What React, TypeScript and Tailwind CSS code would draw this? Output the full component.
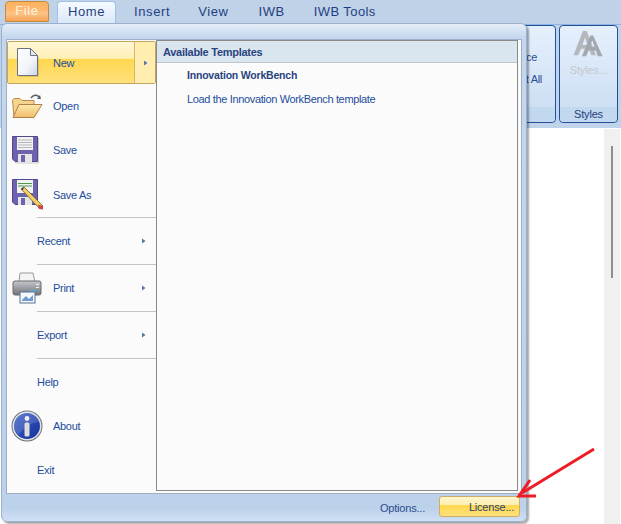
const font = { fontFamily: '"Liberation Sans", Arial, sans-serif' };

const Arrow = () => (
  <svg width="5" height="6" viewBox="0 0 5 6" className="shrink-0">
    <path d="M1 0.5 L4.5 3 L1 5.5 Z" fill="#5a75a8" />
  </svg>
);

const NewIcon = () => (
  <svg width="26" height="32" viewBox="0 0 26 32">
    <defs>
      <linearGradient id="doc" x1="0" y1="0" x2="1" y2="1">
        <stop offset="0" stopColor="#ffffff" />
        <stop offset="0.6" stopColor="#f2f4fa" />
        <stop offset="1" stopColor="#cdd5e8" />
      </linearGradient>
    </defs>
    <path d="M3 2 H16 L23 9 V29 H3 Z" fill="#000" opacity="0.12" transform="translate(1 1)" />
    <path d="M2.5 1.5 H15.5 L22.5 8.5 V28.5 H2.5 Z" fill="url(#doc)" stroke="#6b7280" />
    <path d="M15.5 1.5 V8.5 H22.5 Z" fill="#e2e6ee" stroke="#6b7280" />
  </svg>
);

const OpenIcon = () => (
  <svg width="32" height="26" viewBox="0 0 32 26">
    <defs>
      <linearGradient id="fold" x1="0" y1="0" x2="0" y2="1">
        <stop offset="0" stopColor="#fdeab0" />
        <stop offset="1" stopColor="#f0bb6a" />
      </linearGradient>
    </defs>
    <path d="M20 5 C22 2 26 1 28 4" fill="none" stroke="#55606e" strokeWidth="1.4" />
    <path d="M30 6 L26 6 L29 2 Z" fill="#55606e" />
    <path d="M1.5 7.5 L3 5.5 H9 L11 7.5 H23 V13 L7 24 H3 Z" fill="#f6d48d" stroke="#b88a4e" />
    <path d="M8 11.5 H31 L23 24.5 H2 Z" fill="url(#fold)" stroke="#b07f45" />
  </svg>
);

const Disk = () => (
  <>
    <path d="M0.5 0.5 H25.5 V25.5 H3 L0.5 23 Z" fill="#6d62ad" stroke="#51488c" />
    <rect x="5" y="1" width="16" height="13" fill="#f2f2f2" />
    <rect x="6" y="18" width="14" height="8" fill="#e6e6e6" />
    <rect x="9" y="19" width="4" height="7" fill="#6d62ad" />
  </>
);

const SaveIcon = () => (
  <svg width="28" height="28" viewBox="0 0 28 28" className="ml-px">
    <Disk />
    <path d="M6 4 H20 M6 6.5 H20 M6 9 H20 M6 11.5 H20" stroke="#b8b8b8" />
    <path d="M26.5 2 V27 H3" fill="none" stroke="#000" opacity="0.2" />
  </svg>
);

const SaveAsIcon = () => (
  <svg width="32" height="32" viewBox="0 0 32 32" className="ml-px">
    <Disk />
    <path d="M6 4.5 H20" stroke="#4b9b4b" />
    <path d="M6 7 H20" stroke="#4b9b4b" />
    <path d="M9 10 L12 8 L31 27 L27 29 Z" fill="#f3cf63" stroke="#6d5a2a" strokeWidth="0.8" />
    <path d="M26 25.5 L31 27 L31 30.5 L27 30 Z" fill="#c9464f" />
    <path d="M9 10 L12 8 L11 11 Z" fill="#333" />
  </svg>
);

const PrintIcon = () => (
  <svg width="30" height="32" viewBox="0 0 30 32" className="ml-px">
    <defs>
      <linearGradient id="prn" x1="0" y1="0" x2="0" y2="1">
        <stop offset="0" stopColor="#c5c8cc" />
        <stop offset="1" stopColor="#6f7378" />
      </linearGradient>
    </defs>
    <path d="M8 1 H21 L23 10 H7 Z" fill="#f4f4f4" stroke="#9b9b9b" />
    <rect x="1" y="9" width="28" height="14" rx="2" fill="url(#prn)" stroke="#6a6a6a" />
    <rect x="24" y="12" width="3" height="1" fill="#eee" />
    <rect x="24" y="15" width="3" height="1" fill="#eee" />
    <rect x="18" y="18" width="6" height="2" fill="#5ea8e0" />
    <rect x="8" y="20" width="15" height="11" fill="#f5f8fc" stroke="#5b6f8f" />
    <path d="M10 28 L14 24 L17 27 L21 23 V29 H10 Z" fill="#6f9ad0" />
  </svg>
);

const InfoIcon = () => (
  <svg width="32" height="32" viewBox="0 0 32 32">
    <defs>
      <linearGradient id="inf" x1="0" y1="0" x2="1" y2="1">
        <stop offset="0" stopColor="#3f63c8" />
        <stop offset="1" stopColor="#16309c" />
      </linearGradient>
    </defs>
    <circle cx="16" cy="16" r="15.5" fill="#6b6f78" />
    <circle cx="16" cy="16" r="14.5" fill="#dfe2e6" />
    <circle cx="16" cy="16" r="13" fill="url(#inf)" />
    <path d="M3 16 A13 13 0 0 1 29 12 C20 12 12 18 8 25 A13 13 0 0 1 3 16 Z" fill="#fff" opacity="0.14" />
    <circle cx="16" cy="8.5" r="2.4" fill="#f2f2f2" />
    <rect x="13.5" y="12.5" width="5" height="14" rx="1.5" fill="#dcdcdc" />
  </svg>
);

const StylesIcon = () => (
  <svg width="31" height="28" viewBox="0 0 32 30">
    <path d="M0 27 L10 1 H14 L24 27 H19 L16.5 20 H8 L5 27 Z M9.5 16 H15 L12.2 8 Z" fill="#b4b8bd" fillRule="evenodd" />
    <path d="M9 28 L18 6 H21 L31 28 H26 L24 22 H16 L13.5 28 Z M17.5 18 H22.5 L20 11 Z" fill="#a3a8ae" fillRule="evenodd" />
  </svg>
);

const MenuRow = ({
  label,
  icon,
  arrow,
  h = 'h-[44px]',
}: {
  label: string;
  icon?: React.ReactNode;
  arrow?: boolean;
  h?: string;
}) => (
  <div className={`${h} flex items-center text-[11px] tracking-[-0.3px] text-[#1e4e9c]`}>
    {icon ? (
      <div className="w-[46px] pl-[4px] flex items-center justify-start">{icon}</div>
    ) : (
      <div className="w-[30px]" />
    )}
    <span className="flex-1 pt-px">{label}</span>
    {arrow && (
      <div className="pr-[10px]">
        <Arrow />
      </div>
    )}
  </div>
);

const Sep = () => <div className="h-px ml-[30px] bg-[#c5c5c5]" />;

export default function App() {
  return (
    <div className="relative w-[621px] h-[524px] overflow-hidden bg-white" style={font}>
      {/* tab strip */}
      <div className="h-[24px] bg-[#bfd2e8] flex items-end pl-[5px] text-[13px] text-[#1f3f82] tracking-[0.6px]">
        <div className="w-[44px] h-[21px] mb-[2px] pb-[1px] rounded-t-[4px] border border-[#c98a3e] bg-[linear-gradient(#fdb25f_0%,#ffb872_45%,#fbc48c_60%,#f9a24e_100%)] flex items-center justify-center text-[#fff3e0]">
          File
        </div>
        <div className="ml-[8px] w-[59px] h-[23px] pb-[2px] rounded-t-[4px] border border-b-0 border-[#9fc0e8] bg-gradient-to-b from-[#f5f9fe] to-[#dbe8f8] flex items-center justify-center">
          Home
        </div>
        <div className="ml-[18px] h-[22px] pb-[2px] flex items-center">Insert</div>
        <div className="ml-[28px] h-[22px] pb-[2px] flex items-center">View</div>
        <div className="ml-[30px] h-[22px] pb-[2px] flex items-center">IWB</div>
        <div className="ml-[29px] h-[22px] pb-[2px] flex items-center tracking-[0.4px]">IWB Tools</div>
      </div>

      {/* ribbon */}
      <div className="h-[104px] bg-[#bfd3ea] border-t border-[#8fb4e6] flex justify-end pr-[3px] pb-[5px] gap-[3px]">
        <div className="w-[116px] rounded-[4px] border border-[#24509a] bg-gradient-to-b from-[#e6f0fd] to-[#c9dcf2] flex flex-col">
          <div className="flex-1 flex flex-col items-end pr-[13px] pt-[23px] gap-[5px] text-[11px] tracking-[-0.3px] text-[#2a4f95]">
            <span className="mr-[5px]">ce</span>
            <span>t All</span>
          </div>
          <div className="h-[15px] bg-[#c2d8ef] rounded-b-[4px]" />
        </div>
        <div className="w-[59px] rounded-[4px] border border-[#24509a] bg-gradient-to-b from-[#e6f0fd] to-[#c9dcf2] flex flex-col">
          <div className="flex-1 flex flex-col items-center pt-[4px] gap-[4px] text-[11px] tracking-[-0.2px] text-[#c3c7cc]">
            <StylesIcon />
            <span>Styles...</span>
          </div>
          <div className="h-[15px] bg-[#c2d8ef] rounded-b-[4px] flex items-center justify-center text-[11px] tracking-[-0.2px] text-[#24407f]">
            Styles
          </div>
        </div>
      </div>

      {/* page */}
      <div className="h-[396px] flex justify-end pr-[1px] pt-[1px]">
        <div className="w-[16px] h-full bg-[#f0f0f0] pt-[17px] pl-[7px]">
          <div className="w-[2px] h-[132px] bg-[#8f8f8f]" />
        </div>
      </div>

      {/* file menu */}
      <div className="absolute left-[1px] top-[23px] w-[526px] h-[499px] rounded-[6px] border border-[#9ab0cc] shadow-[2px_2px_2px_rgba(0,0,0,0.35)] bg-[linear-gradient(#e6eef8_0px,#d9e5f4_5px,#c4d7ee_14px,#bcd1ea_470px,#bcd1ea_484px,#d0e0f5_497px)] flex flex-col px-[4px] pt-[15px]">
        <div className="h-[455px] border border-[#a0aec4] bg-[#fbfbfb] flex">
          {/* left column */}
          <div className="w-[149px] flex flex-col pt-px">
            <div className="h-[43px] rounded-[2px] border border-[#c2a45c] bg-[linear-gradient(#fff7d6_0%,#ffefb4_40%,#ffd84f_42%,#ffe07c_100%)] flex items-center text-[11px] tracking-[-0.3px] text-[#1e4e9c]">
              <div className="w-[45px] pl-[7px]">
                <NewIcon />
              </div>
              <span className="flex-1 pt-px">New</span>
              <div className="w-[21px] h-full border-l border-[#d6b768] bg-[#ffeeb0] flex items-center justify-center">
                <Arrow />
              </div>
            </div>
            <MenuRow label="Open" icon={<OpenIcon />} />
            <MenuRow label="Save" icon={<SaveIcon />} />
            <MenuRow label="Save As" icon={<SaveAsIcon />} h="h-[45px]" />
            <Sep />
            <MenuRow label="Recent" arrow h="h-[46px]" />
            <Sep />
            <MenuRow label="Print" icon={<PrintIcon />} arrow h="h-[46px]" />
            <Sep />
            <MenuRow label="Export" arrow h="h-[46px]" />
            <Sep />
            <MenuRow label="Help" h="h-[45px]" />
            <MenuRow label="About" icon={<InfoIcon />} />
            <MenuRow label="Exit" />
          </div>
          {/* right column */}
          <div className="flex-1 h-[451px] border border-[#8a8a8a] mr-[3px] bg-[#fbfbfb] flex flex-col">
            <div className="h-[22px] bg-[#dae6ef] border-b border-[#c0c6cc] pl-[6px] pt-px flex items-center text-[11px] font-bold tracking-[-0.27px] text-[#2a4480]">
              Available Templates
            </div>
            <div className="pl-[30px] pt-[5px] h-[27px] text-[10.5px] font-bold tracking-[-0.2px] text-[#2a4480]">
              Innovation WorkBench
            </div>
            <div className="pl-[30px] pt-[1px] text-[11px] tracking-[-0.35px] text-[#1e4e9c]">
              Load the Innovation WorkBench template
            </div>
          </div>
        </div>
        {/* footer */}
        <div className="flex-1 flex items-start justify-end pt-[2px] pr-[2px] text-[11px] tracking-[-0.2px] text-[#2a4f8f]">
          <span className="mr-[14px] mt-[4px]">Options...</span>
          <div className="w-[81px] h-[21px] pt-[2px] rounded-[3px] border border-[#cfae62] bg-[linear-gradient(#fff5cf_0%,#ffeeb0_40%,#ffd84f_45%,#ffe07c_100%)] flex items-center justify-end pr-[5px] text-[#1f3f78]">
            License...
          </div>
        </div>
      </div>

      {/* red annotation arrow */}
      <svg className="absolute left-[510px] top-[440px]" width="90" height="64" viewBox="0 0 90 64">
        <path d="M84 9 L12 53" stroke="#ee1c25" strokeWidth="3" fill="none" />
        <path d="M20 40 L9 56 L26 56" stroke="#ee1c25" strokeWidth="3" fill="none" />
      </svg>
    </div>
  );
}
